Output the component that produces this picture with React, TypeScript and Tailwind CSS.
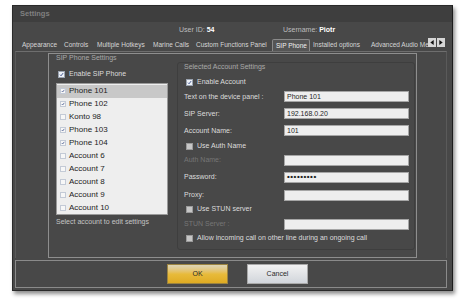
import React from 'react';

type Tone = 'dark' | 'list';

const TABS = [
  { label: 'Appearance', w: 'w-[42px]' },
  { label: 'Controls', w: 'w-[33px]' },
  { label: 'Multiple Hotkeys', w: 'w-[56px]' },
  { label: 'Marine Calls', w: 'w-[43px]' },
  { label: 'Custom Functions Panel', w: 'w-[79px]' },
  { label: 'SIP Phone', w: 'w-[38px]', active: true },
  { label: 'Installed options', w: 'w-[58px]' },
  { label: 'Advanced Audio Me', w: 'w-[60px]' },
];

const ACCOUNTS = [
  { name: 'Phone 101', on: true, selected: true },
  { name: 'Phone 102', on: true },
  { name: 'Konto 98', on: false },
  { name: 'Phone 103', on: true },
  { name: 'Phone 104', on: true },
  { name: 'Account 6', on: false },
  { name: 'Account 7', on: false },
  { name: 'Account 8', on: false },
  { name: 'Account 9', on: false },
  { name: 'Account 10', on: false },
];

function Tick() {
  return (
    <svg viewBox="0 0 8 8" className="h-full w-full">
      <path d="M1.6 4.3 L3.3 6 L6.6 1.7" fill="none" stroke="#24397a" strokeWidth="1.3" />
    </svg>
  );
}

function CheckBox({ checked, tone }: { checked?: boolean; tone: Tone }) {
  if (tone === 'list') {
    return (
      <span className="flex h-[6px] w-[6px] shrink-0 border border-[#c3cad6] bg-[#f7f7f7]">
        {checked ? <Tick /> : null}
      </span>
    );
  }

  return (
    <span
      className={
        checked
          ? 'flex h-[7px] w-[7px] shrink-0 border border-[#9aa3b0] bg-[#eef2f8]'
          : 'flex h-[7px] w-[7px] shrink-0 border border-[#9a9a9a] bg-[#c6c6c6]'
      }
    >
      {checked ? <Tick /> : null}
    </span>
  );
}

function Arrow({ dir }: { dir: 'left' | 'right' }) {
  return (
    <span className="flex w-[8px] items-center justify-center bg-[#d6d6d6]">
      <svg viewBox="0 0 4 6" className="h-[5px] w-[4px]">
        <path d={dir === 'left' ? 'M4 0 L0 3 L4 6 Z' : 'M0 0 L4 3 L0 6 Z'} fill="#111" />
      </svg>
    </span>
  );
}

function Field({ label, value, disabled, height, password }: {
  label: string;
  value?: string;
  disabled?: boolean;
  height: string;
  password?: boolean;
}) {
  return (
    <div className={`flex items-center ${height}`}>
      <span className={`w-[100px] ${disabled ? 'text-[#767676]' : 'text-[#dcdcdc]'}`}>{label}</span>
      <div className="flex h-[11px] w-[125px] items-center border border-[#a6a6a6] bg-[#eeeeee] pl-[2px] text-[#1e1e1e]">
        {password ? (
          <span className="text-[8px] font-bold leading-none tracking-[0.5px]">•••••••••</span>
        ) : (
          value
        )}
      </div>
    </div>
  );
}

function CheckRow({ label, checked, height }: { label: string; checked?: boolean; height: string }) {
  return (
    <div className={`flex items-center gap-[4px] pl-[2px] ${height}`}>
      <CheckBox checked={checked} tone="dark" />
      <span className="text-[#dcdcdc]">{label}</span>
    </div>
  );
}

export default function App() {
  return (
    <div
      className="h-[299px] w-[464px] bg-white pl-[12px] pt-[5px] text-[7px] leading-[8px]"
      style={{ fontFamily: '"Liberation Sans", Arial, sans-serif' }}
    >
      <div className="flex h-[286px] w-[441px] flex-col border border-[#2a2a2a] border-r-[#1c1c1c] bg-[#484848] shadow-[2px_3px_4px_rgba(0,0,0,0.45)]">
        {/* title bar */}
        <div className="flex h-[16px] items-center bg-[#3e3e3e] pl-[7px] text-[7.5px] font-bold text-[#808080]">
          Settings
        </div>

        {/* user info */}
        <div className="flex h-[15px] items-center pl-[166px] text-[#bdbdbd]">
          <span className="w-[104px]">
            User ID: <span className="font-bold text-white">54</span>
          </span>
          <span>
            Username: <span className="font-bold text-white">Piotr</span>
          </span>
        </div>

        {/* tabs */}
        <div className="flex h-[14px] items-end pl-[6px] text-[6.5px]">
          {TABS.map((tab) => (
            <div
              key={tab.label}
              className={
                tab.active
                  ? `${tab.w} flex h-[12px] shrink-0 items-center overflow-hidden whitespace-nowrap rounded-t-[2px] border border-b-0 border-[#8a8a8a] bg-[#555555] pl-[3px] text-[#f0f0f0]`
                  : `${tab.w} flex h-[12px] shrink-0 items-center overflow-hidden whitespace-nowrap pl-[3px] text-[#d6d6d6]`
              }
            >
              {tab.label}
            </div>
          ))}
          <div className="mb-[4px] flex h-[9px] shrink-0 gap-[1px]">
            <Arrow dir="left" />
            <Arrow dir="right" />
          </div>
        </div>

        {/* tab page */}
        <div className="ml-[2px] h-[207px] w-[432px] border-x border-t border-[#5a5a5a] border-t-[#6e6e6e] pt-[1px] pl-[32px]">
          <div className="flex h-[205px] w-[369px] border border-[#8e8e8e] pl-[7px]">
            {/* left column */}
            <div className="flex w-[112px] flex-col">
              <div className="h-[8px] text-[#a8a8a8]">SIP Phone Settings</div>
              <div className="mt-[8px] flex h-[8px] items-center gap-[4px] pl-[2px]">
                <CheckBox checked tone="dark" />
                <span className="text-[#dcdcdc]">Enable SIP Phone</span>
              </div>
              <div className="mt-[5px] flex h-[132px] flex-col border border-[#9a9a9a] bg-[#eeeeee] pt-[1px] text-[8px] text-[#1c1c1c]">
                {ACCOUNTS.map((acc) => (
                  <div
                    key={acc.name}
                    className={`flex h-[13px] items-center gap-[3px] pl-[3px] ${acc.selected ? 'bg-[#c8c8c8]' : ''}`}
                  >
                    <CheckBox checked={acc.on} tone="list" />
                    <span>{acc.name}</span>
                  </div>
                ))}
              </div>
              <div className="mt-[3px] text-[#c4c4c4]">Select account to edit settings</div>
            </div>

            {/* selected account */}
            <div className="ml-[9px] mt-[8px] flex h-[188px] w-[238px] flex-col rounded-[3px] border border-[#3e3e3e] pl-[6px]">
              <div className="h-[8px] text-[#a8a8a8]">Selected Account Settings</div>
              <CheckRow label="Enable Account" checked height="mt-[7px] h-[8px]" />
              <div className="mt-[2px]" />
              <Field label="Text on the device panel :" value="Phone 101" height="h-[17px]" />
              <Field label="SIP Server:" value="192.168.0.20" height="h-[17px]" />
              <Field label="Account Name:" value="101" height="h-[17px]" />
              <CheckRow label="Use Auth Name" height="h-[14px]" />
              <Field label="Auth Name:" disabled height="h-[14px]" />
              <Field label="Password:" password height="h-[20px]" />
              <Field label="Proxy:" height="h-[16px]" />
              <CheckRow label="Use STUN server" height="h-[12px]" />
              <Field label="STUN Server :" disabled height="h-[18px]" />
              <CheckRow label="Allow incoming call on other line during an ongoing call" height="h-[10px]" />
            </div>
          </div>
        </div>

        {/* buttons */}
        <div className="ml-[2px] mt-[2px] flex h-[28px] w-[432px] items-center gap-[19px] border border-[#8a8a8a] pl-[151px]">
          <button
            type="button"
            className="h-[20px] w-[61px] border border-[#9c8440] bg-gradient-to-b from-[#ddd5b8] via-[#e8bb3b] to-[#dfab22] text-[7px] text-[#2a2a2a]"
          >
            OK
          </button>
          <button
            type="button"
            className="h-[20px] w-[61px] border border-[#a9a9a9] bg-gradient-to-b from-[#f2f2f2] to-[#d1d5db] text-[7px] text-[#2a2a2a]"
          >
            Cancel
          </button>
        </div>
      </div>
    </div>
  );
}
